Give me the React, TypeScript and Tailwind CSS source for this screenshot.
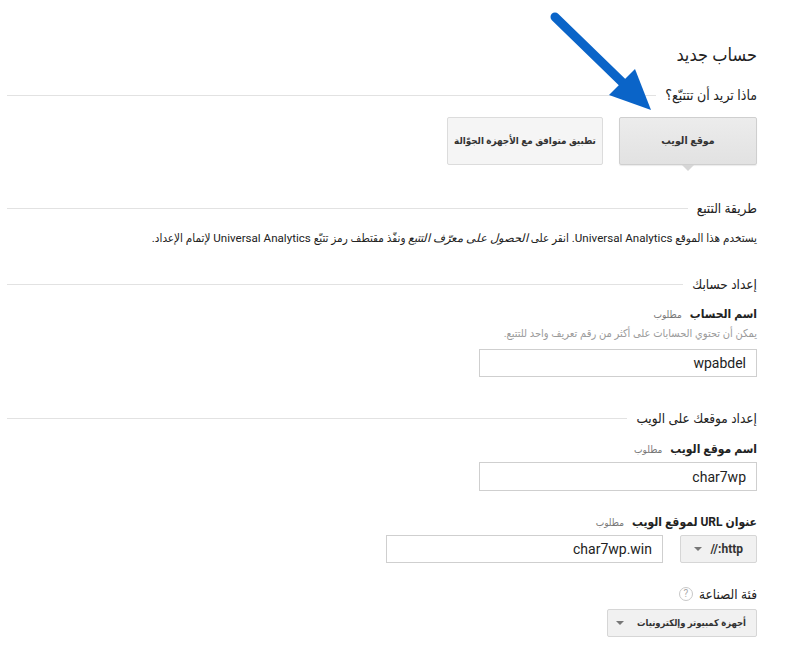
import React from "react";

const FONT = { fontFamily: "Roboto, 'DejaVu Sans Condensed', 'DejaVu Sans', sans-serif" };

function SectionHeader({ children, className = "", textClass = "text-[13.5px]" }: { children: React.ReactNode; className?: string; textClass?: string }) {
  return (
    <div className={`flex items-center gap-[9px] h-[20px] ${className}`}>
      <span className={`whitespace-nowrap text-[#222] ${textClass}`}>{children}</span>
      <div className="flex-1 h-px bg-[#e2e2e2]" />
    </div>
  );
}

function FieldLabel({ children, className = "" }: { children: React.ReactNode; className?: string }) {
  return (
    <div className={`flex items-baseline gap-[8px] h-[20px] leading-[20px] ${className}`}>
      <span className="text-[12px] font-bold text-[#222] whitespace-nowrap">{children}</span>
      <span className="text-[10px] text-[#777]">مطلوب</span>
    </div>
  );
}

function Caret() {
  return <span className="inline-block shrink-0 w-0 h-0 border-l-[4px] border-r-[4px] border-t-[4px] border-l-transparent border-r-transparent border-t-[#777]" />;
}

export default function App() {
  return (
    <div dir="rtl" className="relative min-h-[662px] bg-white pr-[40px] pl-[7px] pt-[42px]" style={FONT}>
      <h1 className="text-[18px] leading-[26px] text-[#222]">حساب جديد</h1>

      <SectionHeader className="mt-[17px]" textClass="text-[14px]">ماذا تريد أن تتتبّع؟</SectionHeader>

      {/* tracking target buttons */}
      <div className="flex gap-[16px] mt-[12px]">
        <div className="relative">
          <button className="w-[138px] h-[48px] bg-gradient-to-b from-[#ececec] to-[#e2e2e2] border border-[#cfcfcf] rounded-[2px] shadow-[0_1px_1px_rgba(0,0,0,0.08)] text-[10.5px] font-bold text-[#333] whitespace-nowrap">
            موقع الويب
          </button>
          <span className="absolute left-1/2 -translate-x-1/2 top-[48px] w-0 h-0 border-l-[6px] border-r-[6px] border-t-[6px] border-l-transparent border-r-transparent border-t-[#d6d6d6]" />
        </div>
        <button className="w-[156px] h-[48px] bg-[#f5f5f5] border border-[#dcdcdc] rounded-[2px] text-[9.8px] font-bold text-[#333] whitespace-nowrap">
          تطبيق متوافق مع الأجهزة الجوّالة
        </button>
      </div>

      <SectionHeader className="mt-[33px]">طريقة التتبع</SectionHeader>
      <p className="mt-[10px] text-[11.6px] leading-[20px] text-[#222] whitespace-nowrap">
        يستخدم هذا الموقع Universal Analytics. انقر على <i>الحصول على معرّف التتبع</i> ونفّذ مقتطف رمز تتبّع Universal Analytics لإتمام الإعداد.
      </p>

      <SectionHeader className="mt-[26px]">إعداد حسابك</SectionHeader>
      <FieldLabel className="mt-[10px]">اسم الحساب</FieldLabel>
      <div className="text-[11px] leading-[20px] text-[#9a9a9a] whitespace-nowrap">يمكن أن تحتوي الحسابات على أكثر من رقم تعريف واحد للتتبع.</div>
      <input
        readOnly
        value="wpabdel"
        className="mt-[5px] block w-[278px] h-[28px] border border-[#cfcfcf] px-[10px] text-[14px] text-[#222] outline-none"
        style={FONT}
      />

      <SectionHeader className="mt-[31px]">إعداد موقعك على الويب</SectionHeader>
      <FieldLabel className="mt-[11px]">اسم موقع الويب</FieldLabel>
      <input
        readOnly
        value="char7wp"
        className="mt-[3px] block w-[278px] h-[29px] border border-[#cfcfcf] px-[10px] text-[14px] text-[#222] outline-none"
        style={FONT}
      />

      <FieldLabel className="mt-[21px]">
        عنوان <span dir="ltr">URL</span> لموقع الويب
      </FieldLabel>
      <div className="flex gap-[17px] mt-[3px]">
        <div className="w-[77px] h-[28px] bg-[#f1f1f1] border border-[#d6d6d6] rounded-[2px] flex items-center justify-between pr-[13px] pl-[13px]">
          <span className="text-[12px] font-bold text-[#333]">http://</span>
          <Caret />
        </div>
        <input
          readOnly
          value="char7wp.win"
          className="block w-[277px] h-[28px] border border-[#cfcfcf] px-[10px] text-[14px] text-[#222] outline-none"
          style={FONT}
        />
      </div>

      <div className="flex items-center gap-[6px] h-[20px] mt-[21px]">
        <span className="text-[13.5px] text-[#222]">فئة الصناعة</span>
        <span className="w-[14px] h-[14px] rounded-full border border-[#c8c8c8] text-[10px] leading-[12px] text-[#aaa] flex items-center justify-center">?</span>
      </div>
      <div className="mt-[5px] w-[150px] h-[28px] bg-[#f1f1f1] border border-[#d6d6d6] rounded-[2px] flex items-center justify-between pr-[10px] pl-[8px]">
        <span className="text-[9.4px] font-bold text-[#333] whitespace-nowrap">أجهزة كمبيوتر وإلكترونيات</span>
        <Caret />
      </div>

      {/* annotation arrow */}
      <svg className="absolute left-0 top-0 pointer-events-none" width="797" height="662" viewBox="0 0 797 662">
        <line x1="555" y1="17" x2="624" y2="84" stroke="#0a64c8" strokeWidth="9" strokeLinecap="round" />
        <polygon points="651,110 609,95 635,69" fill="#0a64c8" />
      </svg>
    </div>
  );
}
